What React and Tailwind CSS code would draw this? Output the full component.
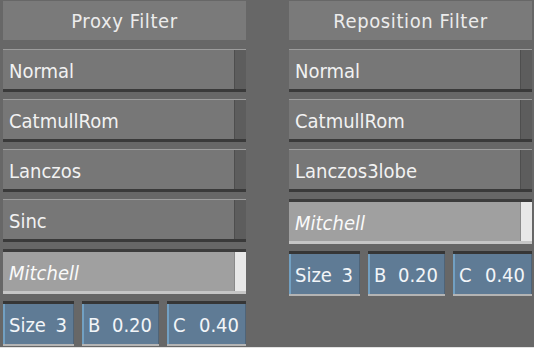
import React from "react";

const PROXY = ["Normal", "CatmullRom", "Lanczos", "Sinc"];
const REPOSITION = ["Normal", "CatmullRom", "Lanczos3lobe"];

const FilterButton = ({ label }) => (
  <div className="flex h-[43px] border-t border-t-[#9c9c9c] border-b-[3px] border-b-[#3a3a3a]">
    <div className="flex-1 flex items-center pl-[6px] pt-[3px] bg-[#777777] text-[#f2f2f2]">
      {label}
    </div>
    <div className="w-[12px] bg-[#5d5d5d] border-l border-l-[#4e4e4e]" />
  </div>
);

const SelectedButton = ({ label }) => (
  <div className="flex h-[45px] border-t-[3px] border-t-[#3c3c3c] border-b-[3px] border-b-[#c6c6c6]">
    <div className="flex-1 flex items-center pl-[6px] pt-[2px] bg-[#a0a0a0] text-[#fafafa] italic">
      {label}
    </div>
    <div className="w-[12px] bg-[#e8e8e8] border-l border-l-[#8a8a8a]" />
  </div>
);

const Field = ({ label, value, width }) => (
  <div
    className={`${width} flex h-[45px] border-t-[3px] border-t-[#363636] border-b-2 border-b-[#b4b4b4]`}
  >
    <div className="w-[2px] bg-[#72a0c2]" />
    <div className="flex-1 flex items-center justify-between pl-[4px] pr-[6px] pt-[2px] bg-[#5f7b95] text-[#f2f5f8] border-r border-r-[#4f6478]">
      <span>{label}</span>
      <span>{value}</span>
    </div>
  </div>
);

const Column = ({ title, items, selected, children }) => (
  <div className="w-[243px] flex flex-col">
    <div className="mt-[1px] h-[39px] flex items-center justify-center bg-[#7a7a7a] text-[#ececec] tracking-[0.6px]">
      {title}
    </div>
    <div className="mt-[9px] flex flex-col gap-[7px]">
      {items.map((item) => (
        <FilterButton key={item} label={item} />
      ))}
      <SelectedButton label={selected} />
      {children}
    </div>
  </div>
);

const App = () => {
  return (
    <div className="w-[534px] h-[348px] bg-[#676767] flex flex-col font-['DejaVu_Sans_Condensed','DejaVu_Sans',sans-serif] text-[20px] leading-none overflow-hidden">
      <div className="flex-1 flex pl-[3px] gap-[43px]">
        {/* Proxy */}
        <Column title="Proxy Filter" items={PROXY} selected="Mitchell">
          <div className="flex gap-[8px]">
            <Field label="Size" value="3" width="w-[71px]" />
            <Field label="B" value="0.20" width="w-[77px]" />
            <Field label="C" value="0.40" width="w-[79px]" />
          </div>
        </Column>

        {/* Reposition */}
        <Column title="Reposition Filter" items={REPOSITION} selected="Mitchell">
          <div className="flex gap-[8px]">
            <Field label="Size" value="3" width="w-[71px]" />
            <Field label="B" value="0.20" width="w-[77px]" />
            <Field label="C" value="0.40" width="w-[79px]" />
          </div>
        </Column>
      </div>
      <div className="h-[1px] bg-[#e2e2e2]" />
    </div>
  );
};

export default App;
